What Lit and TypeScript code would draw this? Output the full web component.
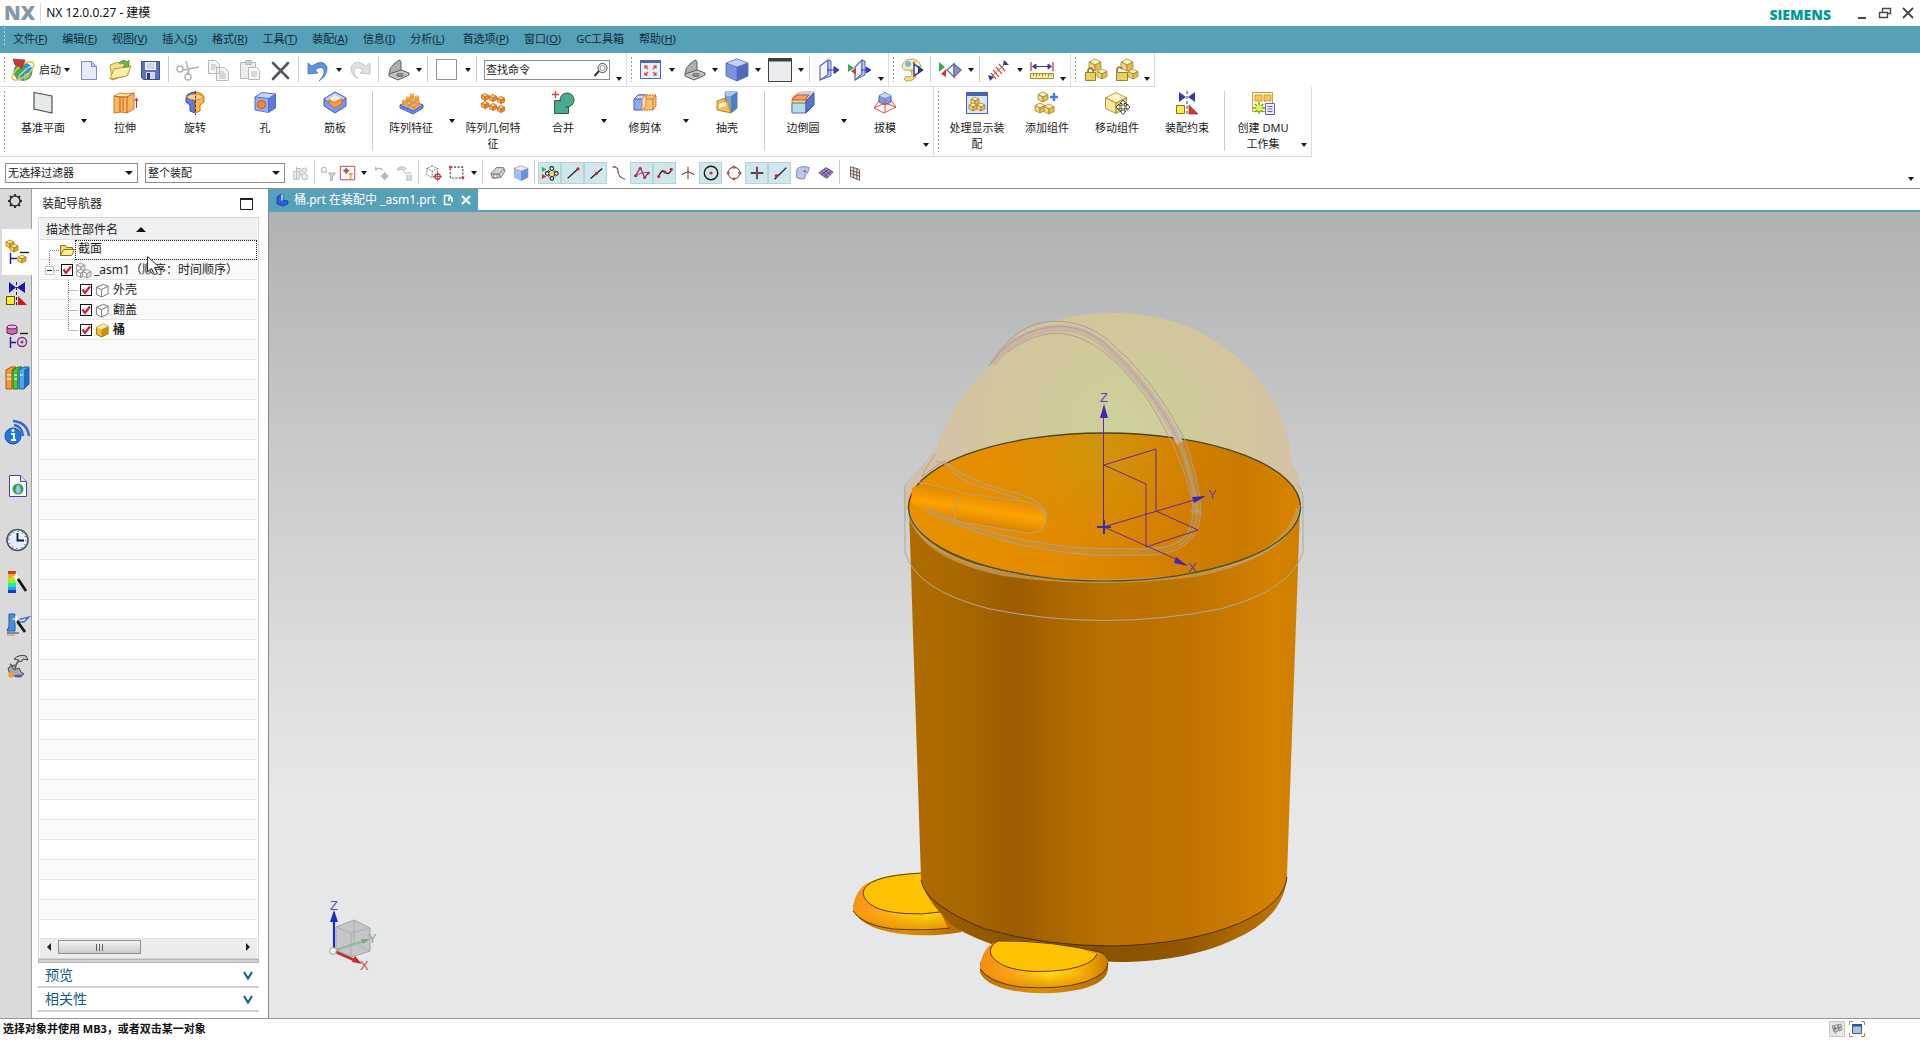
import { LitElement, html, svg, css, TemplateResult, SVGTemplateResult } from "lit";
import { customElement } from "lit/decorators.js";
import { classMap } from "lit/directives/class-map.js";

/** Isometric cube centred on x,y with half-width w. */
const cube = (x: number, y: number, w: number, top: string, left: string, right: string, line: string) => {
  const h = w / 2;
  return svg`
    <polygon points="${x},${y - w} ${x + w},${y - h} ${x},${y} ${x - w},${y - h}" fill=${top} stroke=${line} stroke-width=".8" stroke-linejoin="round"/>
    <polygon points="${x - w},${y - h} ${x},${y} ${x},${y + w} ${x - w},${y + h}" fill=${left} stroke=${line} stroke-width=".8" stroke-linejoin="round"/>
    <polygon points="${x + w},${y - h} ${x},${y} ${x},${y + w} ${x + w},${y + h}" fill=${right} stroke=${line} stroke-width=".8" stroke-linejoin="round"/>`;
};
const gold = (x: number, y: number, w: number) => cube(x, y, w, "#fdf2b8", "#f0d67c", "#e0bd55", "#a8842c");
const orange = (x: number, y: number, w: number) => cube(x, y, w, "#ffd98a", "#ffb347", "#f08a24", "#c8601c");

const ICONS: Record<string, SVGTemplateResult> = {
  start: svg`<circle cx="12" cy="13.500" r="9.500" fill="#2f8fd8"/><path d="M3 11q3-5 9-4l4 4-4 3-3 8q-6-3-6-11z" fill="#48b040"/><path d="M13 16q4-2 7 0-2 5-7 6z" fill="#8ed04a"/><path d="M9 22q-3-3 1-6 6-6 11-9" fill="none" stroke="#b8e0f8" stroke-width="1.200"/><ellipse cx="12" cy="13" rx="13" ry="5.500" fill="none" stroke="#e8c83a" stroke-width="1.600" transform="rotate(-38 12 13)"/><path d="M2 1 14 2 10.500 11 8 8 4 7z" fill="#d0343c" stroke="#8c1c28" stroke-width=".6"/>`,
  new: svg`<path d="M4.500 3.500h10l5 5v13h-15z" fill="#e6ebfa" stroke="#7e88cc"/><path d="M14.500 3.500v5h5z" fill="#c4ccf0" stroke="#7e88cc"/>`,
  open: svg`<path d="M2 7l8-3 2 2 7-2 1 13-16 5z" fill="#f2e08a" stroke="#b89c34"/><path d="M2 21 6 11l17-3-4 10z" fill="#faf0a8" stroke="#b89c34"/><path d="M11 5q4-5 8-1l2-2v7h-6l2-2q-2-3-6-2z" fill="#6cb84a" stroke="#3c8428" stroke-width=".6"/>`,
  save: svg`<path d="M2.500 3.500h18v18h-16l-2-2z" fill="#5a72b8" stroke="#3c4c8c"/><path d="M6 4h11v8H6z" fill="#eef2fa"/><path d="M7.500 6h8M7.500 8h8M7.500 10h8" stroke="#a8b4d0"/><path d="M7 14h9v7H7z" fill="#d0d8ec"/><path d="M8 15h3v6H8z" fill="#2c3c70"/>`,
  cut: svg`<g fill="none" stroke="#b4b4b4" stroke-width="1.500"><circle cx="12" cy="19" r="3"/><circle cx="4" cy="11" r="3"/><path d="M13 16 10 3M7 12 23 9M11 16l3-6"/></g>`,
  copy: svg`<g fill="#f4f4f4" stroke="#b8b8b8"><path d="M1.500 2.500h7l4 4v9h-11zM9.500 9.500h8l4 4v9h-12z"/><path d="M4 7h5M4 9h6M4 11h4M12 14h5M12 16h7M12 18h7M12 20h7"/></g>`,
  paste: svg`<g fill="#ececec" stroke="#b8b8b8"><path d="M2.500 4.500h15v16h-15z"/><path d="M7.500 2.500h6v4h-6z" fill="#d0d0d0"/><path d="M10.500 9.500h8l3 3v9h-11z" fill="#f8f8f8"/><path d="M13 14h6M13 16h6M13 18h6"/></g>`,
  del: svg`<path d="M4 5 19 20M19 5 4 21" stroke="#54585c" stroke-width="2.600" stroke-linecap="round"/>`,
  undo: svg`<path d="M2 5v11l10-1-3-3q7-5 9 0 1 5-5 11 9-6 8-14-4-9-15-1z" fill="#5a92e0" stroke="#3c70c0" stroke-width=".7"/>`,
  redo: svg`<path d="M21 5v11l-10-1 3-3q-7-5-9 0-1 4 4 9-8-5-7-12 4-9 15-1z" fill="#e2e2e2" stroke="#bcbcbc" stroke-width=".8"/>`,
  part: svg`<path d="M8 6 13 2q2 0 2 3v8l-7 3-5 0Q3 10 8 6z" fill="#b0b0b0" stroke="#606060"/><path d="M3 16 15 12l8 3v2l-11 5-9-4z" fill="#c4c4c4" stroke="#606060"/><ellipse cx="14" cy="17" rx="3.500" ry="1.600" fill="#8c8c8c" stroke="#606060" stroke-width=".7"/>`,
  square: svg`<path d="M1.500 1.500h20v20h-20z" fill="#fff" stroke="#909090"/>`,
  fit: svg`<path d="M1.500 2.500h20v18h-20z" fill="#e8eefa" stroke="#4c64b4"/><path d="M1 2h21v3H1z" fill="#4c64b4"/><g stroke="#d85030" stroke-width="1.300" fill="none"><path d="M9 11 6 8M6 10.500V8h2.500M14 11l3-3M14.500 8H17v2.500M9 14l-3 3M6 14.500V17h2.500M14 14l3 3M14.500 17H17v-2.500"/></g>`,
  bluecube: svg`<path d="M12 1 23 5 12 9 1 5z" fill="#c4d2f8"/><path d="M1 5 12 9v14L1 18z" fill="#7c94dc"/><path d="M23 5 12 9v14l11-5z" fill="#5068bc"/><path d="M12 1 23 5v13l-11 5L1 18V5zM1 5l11 4 11-4M12 9v14" fill="none" stroke="#5468b4" stroke-width=".8"/>`,
  winrect: svg`<path d="M.500 1.500h23v22H.500z" fill="#ececf0" stroke="#404040"/><path d="M0 0h24v3.500H0z" fill="#404040"/>`,
  section: svg`<path d="M3 8 11 2v15l-8 5z" fill="#f2f5ff" stroke="#5868b0" stroke-width="1.200"/><path d="M11 2l3 1v15l-11 4 8-5z" fill="#b8c6ec" stroke="#5868b0"/><path d="M10 12h8M17 8.500l5 3.500-5 3.500z" stroke="#3838b8" fill="#3838b8"/>`,
  section2: svg`<path d="M7 9 14 2v14l-7 6z" fill="#f2f5ff" stroke="#5868b0" stroke-width="1.200"/><path d="M14 2l3 1v14l-10 5 7-6z" fill="#b8c6ec" stroke="#5868b0"/><path d="M13 12h6M18 9l5 3-5 3z" stroke="#3838b8" fill="#3838b8"/><path d="M0 6l6 4-6 4z" fill="#2fae4a"/><path d="M8 10v7l-5-4z" fill="#d8343c"/>`,
  palette: svg`<path d="M1 8Q3 1 11 1q8 1 9 8-2-2-5 1-1 4-5 2-9 1-9-4z" fill="#f8ecc0" stroke="#c0a458"/><circle cx="7" cy="6" r="3" fill="#74bcd8"/><circle cx="13" cy="4.500" r="1.500" fill="#e8a040"/><path d="M9 13q4 3 0 6-5-2-6 2l2 2q9 0 10-5l-1-5z" fill="#f6de90" stroke="#c0a458"/><path d="M13 6v12l8.500-6z" fill="#fff" stroke="#4048a0" stroke-width="1.600"/><path d="M17 8v8l5-4z" fill="#303878"/>`,
  showhide: svg`<path d="M1 4 7 9 1 14z" fill="#2fae4a"/><path d="M8 11v8l-5-3z" fill="#d8343c"/><path d="M9 12 16 6v13z" fill="#fff" stroke="#5c6cb0" stroke-width="1.300"/><path d="M16 6l7 6-7 7z" fill="#8898cc" stroke="#5c6cb0" stroke-width="1.300"/>`,
  dist: svg`<path d="M3 20 20 4" stroke="#6c6c9c"/><path d="M1 17l6 2-4 4zM17 2l5 5-6 0z" fill="#3838a0"/><path d="M6 12l6 7M9 9l6 7M12 6l6 7M4 15l5 6" stroke="#d85040" stroke-width="1.200"/>`,
  ruler: svg`<path d="M1 4v9M23 4v9" stroke="#d84040" stroke-width="1.400"/><path d="M3 8.500h18M6 6 2.500 8.500 6 11zM18 6l3.500 2.500L18 11z" fill="#3838a0" stroke="#3838a0"/><path d="M.500 15.500h23v5H.500z" fill="#f8eca0" stroke="#a88c30"/><path d="M3.500 16v2M6.500 16v3M9.500 16v2M12.500 16v3M15.500 16v2M18.500 16v3M21 16v2" stroke="#a88c30"/>`,
  lock1: svg`${gold(12, 7, 6)}${gold(19, 16, 5)}<path d="M2.500 14.500h10v8h-10z" fill="#ecd060" stroke="#9c8028"/><path d="M5 14v-2q2.500-4 5 0v2" fill="none" stroke="#8c7430" stroke-width="1.600"/>`,
  lock2: svg`${gold(13, 7, 6)}${gold(19, 16, 5)}<path d="M2.500 14.500h11v8h-11z" fill="#ecd060" stroke="#9c8028"/><path d="M3 14v-3q2.500-4 5 0" fill="none" stroke="#8c7430" stroke-width="1.600"/>`,
  plane: svg`<path d="M3 1.500 21 5v17L3 18z" fill="#e4eae8" stroke="#505654" stroke-width="1.200"/>`,
  extrude: svg`<path d="M1 5 7 2l6 1 8-1v16l-7 4-6-1-7 1z" fill="#fbb860" stroke="#c87830"/><path d="M1 5l6 1 7 0 7-4M7 6v15M14 6v16M10 6v14" fill="none" stroke="#c05a18"/><path d="M2 5l5-2.500 6 1L20 2.500 14 5z" fill="#ffe0a8"/><path d="M23.500 17V8M22 10l1.500-3L25 10" stroke="#c03030" fill="none"/>`,
  revolve: svg`<path d="M12 1Q3 2 3 7v4l4 3v6l5 2z" fill="#5c7ce0" stroke="#3448a0"/><path d="M12 1q9 1 9 6v4l-4 3v6l-5 2z" fill="#ffb84c" stroke="#c87020"/><path d="M3 6q9-6 18 0-4 3-9 3T3 6z" fill="#ffd890" stroke="#c87020" stroke-width=".7"/><path d="M12.500 0v24" stroke="#902020" stroke-dasharray="3 1.500"/>`,
  hole: svg`<path d="M2 6 9 1.500 22.500 3l-7 4.500z" fill="#c8d6fc"/><path d="M2 6l13.500 1.500V21L2 19z" fill="#94aef4"/><path d="M15.500 7.500l7-4.500v14l-7 4.500z" fill="#5c78dc"/><path d="M2 6 9 1.500 22.500 3v14l-7 4.500L2 19zM2 6l13.500 1.500 7-4.500M15.500 7.500V21" fill="none" stroke="#4860c4" stroke-width=".9"/><circle cx="8.500" cy="13.500" r="4" fill="#ff8c28" stroke="#c05010"/>`,
  rib: svg`<path d="M12 1 23 7v8l-11 7L1 15V8z" fill="#7c98ec" stroke="#4058b8"/><path d="M12 1 23 7l-11 8L1 8z" fill="#c0d0fa" stroke="#4058b8" stroke-width=".8"/><path d="M12 4 19 7.500v4L12 17 6 12.500v-4z" fill="#fff0d8"/><path d="M6 8.500l5 3 8-4v5L12 17l-6-4.500z" fill="#ff9838" stroke="#c86418" stroke-width=".8"/>`,
  patfeat: svg`<path d="M1 14 11 9l13 5-10 6z" fill="#a8bef8" stroke="#4c68c4"/><path d="M1 14v3l13 6 10-6v-3l-10 6z" fill="#6888e0" stroke="#4c68c4"/>${[[5, 11], [9, 8], [13, 5], [10, 13], [14, 10], [18, 7], [15, 15], [19, 12]].map(([x, y]) => svg`<path d="M${x - 2} ${y - 1}v4q2 1.500 4 0v-4z" fill="#f09830"/><ellipse cx=${x} cy=${y - 1} rx="2" ry="1.200" fill="#ffc870" stroke="#c87020" stroke-width=".5"/>`)}`,
  patgeo: svg`${orange(4, 6, 3.5)}${orange(12, 7, 3.5)}${orange(20, 9, 3.5)}${orange(4, 14, 3.5)}${orange(12, 16, 3.5)}${orange(20, 18, 3.5)}`,
  unite: svg`<path d="M3.500 9.500h14v13h-14z" fill="#4ca890" stroke="#285c50"/><circle cx="16" cy="9" r="7" fill="#4ca890" stroke="#285c50"/><path d="M4.500 10.500h10v8h-10z" fill="#4ca890"/><path d="M4.500 0v7M1 3.500h7" stroke="#d84040" stroke-width="1.400"/>`,
  trim: svg`<path d="M1 8 5 4h8l-3 4v11H1z" fill="#90a8f0" stroke="#4c60b8"/><path d="M1 8h9l3-4H5z" fill="#c8d4fc" stroke="#4c60b8"/><path d="M11 8l3-4h9v11l-3 4h-9z" fill="#ffc468" stroke="#c83c28" stroke-dasharray="1.500 1"/><path d="M11 8h9l3-4M20 8v11" fill="none" stroke="#c87830"/><path d="M9 8l4-5v12l-4 5z" fill="#fcd8b8" stroke="#c87830" stroke-width=".7"/>`,
  shell: svg`<path d="M10 1h12v16l-6 5-4-5z" fill="#7ca4d8" stroke="#5078b4"/><path d="M16 5l6-4v16l-6 5z" fill="#4c80c0"/><path d="M10 1h12l-6 4h-5z" fill="#a8c8ec"/><path d="M2 10l8-3v4h4v5l2 6-14-3z" fill="#f0bc50" stroke="#b88428"/><path d="M4 13l7-2v4l-7 2z" fill="#fff4cc"/>`,
  blend: svg`<path d="M1 9Q3 2 12 1h11l-8 7v13H1z" fill="#ffd870" stroke="#c07828" stroke-width=".8"/><path d="M6 3Q9 1 12 1h11l-6 4H7z" fill="#b8dce8"/><path d="M1 9q2-4 6-5h11q-3 2-3 5z" fill="#ff9c60" stroke="#c03828" stroke-width=".8"/><path d="M1 12h14v10H1z" fill="#b4dcec" stroke="#5470b8"/><path d="M15 10l8-8v12l-8 8z" fill="#5c74cc" stroke="#3c50a8"/>`,
  draft: svg`<path d="M1 17 12 1l11 15-12 6z" fill="#fdf4f4" stroke="#d85848"/><path d="M6 4.500 12 2l6 2.500v6.500L12 14l-6-3z" fill="#7c9cdc" stroke="#4868b0"/><path d="M6 4.500l6 2.500 6-2.500L12 2z" fill="#c4d8f8"/><path d="M12 7v15M1 17l11-5 11 4" stroke="#d85848" fill="none"/>`,
  procdisp: svg`<path d="M1.500 1.500h21v21h-21z" fill="#dce6fa" stroke="#4860b8"/><path d="M1 1h22v4H1z" fill="#4860b8"/>${gold(10, 10, 4)}${gold(8, 16, 4)}${gold(16, 16, 4)}`,
  addcomp: svg`${gold(8, 6, 5)}${gold(5, 17, 5)}${gold(14, 18, 5)}<path d="M19 2v8M15 6h8" stroke="#3c80dc" stroke-width="2.400"/>`,
  movecomp: svg`${cube(11, 12, 10.5, "#fff6c4", "#fbe795", "#ecd070", "#9c8030")}<path d="M18 9l3 3.500h-2V15h3v-2l3 3-3 3.500V17h-3v3h2l-3 3.500-3-3.500h2v-3h-3v2.500L11 16l3-3v2h3v-2.500h-2z" fill="#fff" stroke="#202020" stroke-width=".8"/>`,
  constrain: svg`<path d="M4 1v10l7-5zM20 1v10l-7-5z" fill="#3c34b8"/><path d="M12 0v24" stroke="#404040" stroke-dasharray="3 2"/><path d="M1.500 14.500h8v8h-8z" fill="#fcec50" stroke="#807020"/><path d="M14 14v9h9z" fill="#d03c3c" stroke="#801818" stroke-width=".6"/>`,
  dmu: svg`<path d="M1.500 1.500h20v19h-20z" fill="#fff4d0" stroke="#d0a040"/><path d="M4 4h7v6H4zM13 4h7v6h-7z" fill="#f8c850" stroke="#b88420" stroke-width=".7"/><path d="M8 11v12M2 17h12M4 13l8 8M12 13l-8 8" stroke="#48b030" stroke-width="1.400"/><circle cx="8" cy="17" r="3" fill="#f0f040"/><path d="M14.500 12.500h9v11h-9z" fill="#f0ecfc" stroke="#7060a8"/><path d="M16.500 15.500h5M16.500 18h5M16.500 20.500h5" stroke="#7060a8"/>`,
};

/* Selection bar glyphs, drawn on a 20 unit grid. */
const SMALL: Record<string, SVGTemplateResult> = {
  g1: svg`<g fill="#ececec" stroke="#b8b8b8"><path d="M2 8h6v9H2zM5 5h5v9"/><circle cx="14" cy="7" r="2.500"/><circle cx="14" cy="14" r="3.500"/><path d="M5 3v14"/></g>`,
  g2: svg`<g fill="none" stroke="#b8b8b8" stroke-width="1.300"><path d="M3 5q3-3 5 0M3 5v4h5V6"/><path d="M11 10h7l-3 4v4h-2v-4z" fill="#d4d4d4"/></g>`,
  box: svg`<path d="M1.500 2.500h16v15h-16z" fill="#fff" stroke="#b83848"/><path d="M8 4v7M4.500 7.500h7" stroke="#604048"/><circle cx="8" cy="7.500" r="2" fill="none" stroke="#804048"/><path d="M10 10h6l-2 3v4h-2v-4z" fill="#f0a848"/>`,
  g3: svg`<g fill="none" stroke="#b0b0b0" stroke-width="1.300"><path d="M3 7q3-5 8 0M3 7V3M13 9v9M8.500 13.500h9"/><circle cx="13" cy="13.500" r="2.500"/></g>`,
  g4: svg`<g fill="#dedede" stroke="#b4b4b4"><path d="M2 5q5-4 9 0l-2 2q-3-2-7 0zM8 7l3 4M11 10h6M12 12v6h5v-6"/></g>`,
  dotcube: svg`<path d="M8 2l6 3v7l-6 3-6-3V5zM2 5l6 3 6-3M8 8v7" fill="none" stroke="#505050" stroke-dasharray="1.500 1.500"/><circle cx="14" cy="14" r="3" fill="none" stroke="#b83838" stroke-width="1.300"/><path d="M14 9v10M9 14h10" stroke="#b83838"/>`,
  dotrect: svg`<path d="M2.500 3.500h14v12h-14z" fill="none" stroke="#404040" stroke-width="1.200" stroke-dasharray="2.500 1.500"/><path d="M1 2h3v3H1zM15 14h3v3h-3z" fill="#c84040"/>`,
  shade: svg`<path d="M2 11 8 4h8l2 4-5 7-9 1z" fill="#d0d0d8" stroke="#707078"/><path d="M2 11l9 0 6-6M11 11l2 4" fill="none" stroke="#707078"/><path d="M5 12h4v3H5z" fill="#fff" stroke="#c04848" stroke-width=".8"/>`,
  bcube: svg`<path d="M10 2l8 3v10l-8 4-8-4V5z" fill="#9cc0ec"/><path d="M10 2l8 3-8 3-8-3z" fill="#e0ecfc" stroke="#d06868" stroke-width=".6"/><path d="M10 8l8-3v10l-8 4z" fill="#6c90d8"/>`,
  snap: svg`<path d="M1 3l5 3-5 3z" fill="#2fae4a"/><path d="M1 11l5 3-5 3z" fill="#d03838"/><g fill="#fff" stroke="#202020" stroke-width="1.300"><circle cx="12" cy="5" r="2"/><circle cx="12" cy="16" r="2"/><circle cx="7" cy="10.500" r="2"/><circle cx="17" cy="10.500" r="2"/></g><path d="M8 7l8 7M16 7l-8 7" stroke="#202020"/><circle cx="12" cy="10.500" r="2.500" fill="#f8d840"/>`,
  end: svg`<path d="M4 16 16 5" stroke="#181818" stroke-width="1.400"/><circle cx="15.500" cy="5.500" r="1.800" fill="#c82838"/>`,
  mid: svg`<path d="M4 16 17 5" stroke="#181818" stroke-width="1.400"/><circle cx="10.500" cy="10.500" r="1.800" fill="#c82838"/>`,
  curve: svg`<path d="M3 3q6 0 6 5 0 7 8 9" fill="none" stroke="#585858" stroke-width="1.200"/><path d="M3 3h3M9 8v2" stroke="#c05050" stroke-width="1.500"/>`,
  poly: svg`<path d="M3 13 8 4l5 11 4-5" fill="none" stroke="#b02848" stroke-width="1.400"/><path d="M2 14Q10 8 18 10" fill="none" stroke="#4848a0"/><g fill="#c82838"><circle cx="3" cy="13" r="1.800"/><circle cx="8" cy="5" r="1.800"/><circle cx="13" cy="15" r="1.800"/><circle cx="17" cy="10" r="1.800"/></g>`,
  spline: svg`<path d="M3 14Q6 5 10 9t7-2" fill="none" stroke="#181818" stroke-width="1.400"/><g fill="#c82838"><circle cx="3" cy="14" r="1.800"/><circle cx="10" cy="9" r="1.800"/><circle cx="17" cy="6" r="1.800"/></g>`,
  inter: svg`<path d="M10 3v14M3 12q7-6 14 0" fill="none" stroke="#606060" stroke-width="1.300"/><circle cx="10" cy="9" r="1.600" fill="#c05858"/>`,
  center: svg`<circle cx="10" cy="10" r="7.500" fill="none" stroke="#181818" stroke-width="1.500"/><circle cx="10" cy="10" r="1.800" fill="#c82838"/>`,
  quad: svg`<circle cx="10" cy="10" r="6.500" fill="none" stroke="#686868" stroke-width="1.200"/><g fill="#c85050"><circle cx="10" cy="3.500" r="1.800"/><circle cx="10" cy="16.500" r="1.800"/><circle cx="3.500" cy="10" r="1.800"/><circle cx="16.500" cy="10" r="1.800"/></g>`,
  plus: svg`<path d="M10 3v14M3 10h14" stroke="#181818" stroke-width="1.500"/><circle cx="10" cy="10" r="1.800" fill="#c82838"/>`,
  oncurve: svg`<path d="M4 17 17 4" stroke="#181818" stroke-width="1.400"/><circle cx="6" cy="13" r="1.900" fill="#c82838"/>`,
  surf: svg`<path d="M3 6q5-5 14-2l-2 6q-3 1-3 6-5 2-9-1z" fill="#b8c8ec" stroke="#7080a8"/><circle cx="12" cy="8" r="1.400" fill="#c05858"/>`,
  mesh: svg`<path d="M2 10 10 4l8 5-7 7z" fill="#a888c8" stroke="#605080"/><path d="M5 8l7 7M8 6l7 6M5 12l8-6M8 14l8-6" stroke="#503c70"/>`,
  grid: svg`<path d="M5 3l10 3v12L5 14z" fill="#f0e4e0" stroke="#605048"/><path d="M8.500 4v11.500M12 5v12M5 7l10 3M5 10.500l10 3" stroke="#605048"/>`,
};

/* Resource bar glyphs. */
const RAIL: Record<string, SVGTemplateResult> = {
  gear: svg`<circle cx="12" cy="12" r="5" fill="none" stroke="#303030" stroke-width="1.600"/><path d="M12 5v2M12 17v2M5 12h2M17 12h2M7 7l1.500 1.500M15.500 15.500 17 17M17 7l-1.500 1.500M8.500 15.500 7 17" stroke="#303030" stroke-width="2"/>`,
  asm: svg`${cube(5, 4, 4, "#fff0a0", "#f8cc48", "#e0a828", "#b07c10")}${cube(9, 8, 4, "#fff0a0", "#f8cc48", "#e0a828", "#b07c10")}${cube(17, 19, 4, "#fff0a0", "#f8cc48", "#e0a828", "#b07c10")}<path d="M5.500 13v11M5.500 18.500H12" stroke="#1818a0" stroke-width="1.400"/><path d="M15 12.500h9" stroke="#202020" stroke-width="1.400"/>`,
  con: svg`<path d="M4 0v11l7-5.500zM20 0v11l-8-5.500z" fill="#1818b0"/><path d="M11.500 0v24" stroke="#202020" stroke-dasharray="3 2"/><path d="M1.500 14.500h8v8h-8z" fill="#fcec30" stroke="#605010"/><path d="M13 14v9h9z" fill="#c81818"/>`,
  nav: svg`<path d="M2 3v6q5 3 10 0V3z" fill="#c868b8" stroke="#602060"/><ellipse cx="7" cy="3" rx="5" ry="2" fill="#f0b8e4" stroke="#602060"/><path d="M5.500 13v11M5.500 18.500H11" stroke="#1818a0" stroke-width="1.400"/><path d="M15 9.500h8" stroke="#202020" stroke-width="1.400"/><circle cx="17" cy="18" r="4.500" fill="none" stroke="#903078" stroke-width="1.400"/><circle cx="17" cy="18" r="1.500" fill="#903078"/>`,
  books: svg`<path d="M1 4l5-3h5L7 4v19H1z" fill="#f89838" stroke="#a85810"/><path d="M8 4l5-3h4l-4 3v19H8z" fill="#48c838" stroke="#187818"/><path d="M14 4l5-3h5v17l-5 5h-5z" fill="#4ca8e8" stroke="#1860a8"/><path d="M19 4l5-3v17l-5 5z" fill="#2468c0"/><path d="M2 9h4M2 13h4M9 9h3M9 13h3M15 9h3" stroke="#fff"/>`,
  info: svg`<circle cx="8" cy="16" r="8" fill="#2078e0" stroke="#1050a8"/><path d="M6 14h3v6h2M6 20h5" stroke="#fff" stroke-width="2" fill="none"/><circle cx="8" cy="10.500" r="1.500" fill="#fff"/><path d="M9 5q8 1 9 11M8 1q14 1 16 15" fill="none" stroke="#3c64c8" stroke-width="2.400"/>`,
  doc: svg`<path d="M4.500 1.500h11l6 6v15h-17z" fill="#fff" stroke="#384c9c"/><path d="M15.500 1.500v6h6" fill="#d8e0f8" stroke="#384c9c"/><circle cx="13" cy="15" r="5.500" fill="#3c9c50"/><path d="M13 10q6 7 0 10-5-3 0-10z" fill="#8cc8f0"/>`,
  clock: svg`<circle cx="12.500" cy="12" r="10.500" fill="#e4eefa" stroke="#50585f" stroke-width="1.600"/><circle cx="12.500" cy="12" r="8.500" fill="none" stroke="#283040" stroke-dasharray="1 3.450"/><path d="M12.500 5v7.500H19" fill="none" stroke="#101828" stroke-width="1.800"/>`,
  wand: svg`<path d="M3 1h8v3H3z" fill="#e83020"/><path d="M3 4h8v4H3z" fill="#f8b020"/><path d="M3 8h8v5H3z" fill="#a0f020"/><path d="M3 13h8v4H3z" fill="#20e8b0"/><path d="M3 17h8v3H3z" fill="#20a0f8"/><path d="M3 20h8v3H3z" fill="#1838c0"/><path d="M13 9l8 12" stroke="#181818" stroke-width="2.800"/><path d="M11 2l1 4 4 1-4 1-1 4-1-4-3-1 3-1z" fill="#fff"/>`,
  heal: svg`<path d="M4 2h6v17H2l2-5z" fill="#4890d8" stroke="#2058a0"/><path d="M12 8l12-3-5 5h-6M10 7h6M2 21h12" stroke="#4870c0" stroke-width="1.400" fill="none"/><path d="M2 23h8" stroke="#c8b848" stroke-width="1.600"/><path d="M12 9l8 11" stroke="#181818" stroke-width="2.800"/><path d="M11 2l1 4 4 1-4 1-1 4-1-4-3-1 3-1z" fill="#fff"/>`,
  tools: svg`<path d="M9 5q5-5 12-3l2 4-5-1-2 3-3-2z" fill="#d0d0d0" stroke="#383838"/><path d="M14 6l-3 5-4 1-2-2M11 11l-1 4" fill="none" stroke="#606060" stroke-width="1.800"/><path d="M3 14l4-2 2 4 5-2 2 4 3 2-5 3-9-2z" fill="#a8a8b4" stroke="#484850"/><circle cx="6" cy="21" r="2.800" fill="#f0a030"/><path d="M10 22h7" stroke="#68587c" stroke-width="2.400"/>`,
};

const caret = html`<svg class="caret" viewBox="0 0 6 4" aria-hidden="true"><path d="M0 0h6L3 4z" fill="#181818"/></svg>`;
const ic = (set: Record<string, SVGTemplateResult>, name: string, box: number, cls: string) =>
  html`<svg class=${cls} viewBox="0 0 ${box} ${box}" aria-hidden="true">${set[name]}</svg>`;
const sep = html`<i class="sep"></i>`;
const grip = html`<i class="grip"></i>`;

@customElement("nx-viewport")
export class NxViewport extends LitElement {
  static styles = css`
    :host { display: flex; min-width: 0; min-height: 0; background: linear-gradient(#b0b2b2 0, #c6c8c9 28%, #dfe0e1 60%, #e6e7e9 72%, #e6e7e9); }
    .scene { width: 100%; height: 100%; display: block; }
    .lbl { font-family: "Liberation Sans", Arial, sans-serif; font-size: 13px; }
  `;

  private dome() {
    return svg`
      <path d="M1299 505Q1303 478 1293 465Q1286 410 1255 375Q1200 313 1112 313Q1080 313 1052 322Q1022 326 1004 347L990 366Q948 405 935 452L906 486V510Q1100 600 1299 505z" fill="url(#dome)"/>
      <path d="M934 453L906 484Q903 490 905 520" fill="none" stroke="#c2b79a"/>`;
  }

  render() {
    return html`
      <svg class="scene" viewBox="269 212 1651 806" role="img">
        <defs>
          <linearGradient id="side" x1="909" x2="1300" y1="0" y2="0" gradientUnits="userSpaceOnUse">
            <stop offset="0" stop-color="#b06c00"/><stop offset=".14" stop-color="#a86700"/>
            <stop offset=".23" stop-color="#a06000"/><stop offset=".28" stop-color="#9c5c00"/>
            <stop offset=".36" stop-color="#a86500"/><stop offset=".5" stop-color="#b87000"/>
            <stop offset=".72" stop-color="#c07300"/><stop offset=".86" stop-color="#cc7c00"/>
            <stop offset=".94" stop-color="#d48200"/><stop offset="1" stop-color="#ce7e00"/>
          </linearGradient>
          <linearGradient id="under" x1="921" x2="1287" y1="0" y2="0" gradientUnits="userSpaceOnUse">
            <stop offset="0" stop-color="#a06000"/><stop offset=".4" stop-color="#845000"/>
            <stop offset=".7" stop-color="#905600"/><stop offset=".9" stop-color="#b06c00"/><stop offset="1" stop-color="#c07600"/>
          </linearGradient>
          <linearGradient id="inner" x1="909" x2="1300" y1="0" y2="0" gradientUnits="userSpaceOnUse">
            <stop offset="0" stop-color="#e89200"/><stop offset=".4" stop-color="#e28a00"/>
            <stop offset=".65" stop-color="#d48000"/><stop offset=".85" stop-color="#ca7a00"/><stop offset="1" stop-color="#d88400"/>
          </linearGradient>
          <radialGradient id="spot" cx="1095" cy="450" r="110" gradientUnits="userSpaceOnUse">
            <stop offset="0" stop-color="#cc980c" stop-opacity=".9"/><stop offset=".5" stop-color="#d2920a" stop-opacity=".5"/><stop offset="1" stop-color="#dc8a00" stop-opacity="0"/>
          </radialGradient>
          <radialGradient id="dome" cx="1120" cy="425" r="185" gradientUnits="userSpaceOnUse">
            <stop offset="0" stop-color="#ced29c"/><stop offset=".35" stop-color="#cfca9a"/>
            <stop offset=".65" stop-color="#d3c69c"/><stop offset="1" stop-color="#d4c2a8"/>
          </radialGradient>
          <linearGradient id="handle" x1="985" x2="979" y1="492" y2="532" gradientUnits="userSpaceOnUse">
            <stop offset="0" stop-color="#dc8600"/><stop offset=".45" stop-color="#ffa202"/><stop offset=".75" stop-color="#e48c00"/><stop offset="1" stop-color="#b06a00"/>
          </linearGradient>
          <linearGradient id="rim1" x1="853" x2="950" y1="880" y2="930" gradientUnits="userSpaceOnUse">
            <stop offset="0" stop-color="#f08c10"/><stop offset=".3" stop-color="#ffa018"/><stop offset=".75" stop-color="#ffdc10"/><stop offset="1" stop-color="#f8b808"/>
          </linearGradient>
          <linearGradient id="rim2" x1="980" x2="1108" y1="0" y2="0" gradientUnits="userSpaceOnUse">
            <stop offset="0" stop-color="#f08c10"/><stop offset=".28" stop-color="#ffa818"/><stop offset=".55" stop-color="#ffdc10"/><stop offset=".8" stop-color="#f8ac08"/><stop offset="1" stop-color="#c87c00"/>
          </linearGradient>
          <linearGradient id="rimshade" x1="0" x2="0" y1="0" y2="1">
            <stop offset=".7" stop-color="#e08800" stop-opacity="0"/><stop offset="1" stop-color="#e08800" stop-opacity=".8"/>
          </linearGradient>
          <linearGradient id="padbase" x1="0" x2="1"><stop offset="0" stop-color="#c07200"/><stop offset=".5" stop-color="#dc8e08"/><stop offset="1" stop-color="#b06a00"/></linearGradient>
        </defs>

        <g stroke-linejoin="round">
          <path d="M853 905Q853 920 878 929Q915 940 962 932L950 915z" fill="url(#padbase)"/>
          <path id="r1" d="M922 873Q880 873 862 887Q853 897 853 911Q860 924 893 929Q925 932 948 928L925 880z" fill="url(#rim1)"/>
          <path d="M922 873Q880 873 862 887Q853 897 853 911Q860 924 893 929Q925 932 948 928L925 880z" fill="url(#rimshade)"/>
          <path d="M922 873Q864 876 863 893Q866 911 905 913.500Q922 915 940 913L922 875z" fill="#ffc203"/>
          <path d="M922 873Q864 876 863 893Q866 911 905 913.500Q922 915 940 912M853 911Q862 925 893 929Q925 931 950 928" fill="none" stroke="#4a3200" stroke-width=".9"/>
        </g>

        <path d="M921 875Q921 896 953 926Q975 940 1010 950Q1070 963 1127 962Q1190 960 1233 940Q1285 918 1287 875z" fill="url(#under)"/>
        <path d="M909 510L921 878Q925 905 985 929Q1045 946 1113 946Q1190 944 1240 923Q1285 903 1287 875L1300 510z" fill="url(#side)"/>
        <path d="M921 880Q925 905 985 929Q1045 946 1113 946Q1190 944 1240 923Q1285 903 1287 877" fill="none" stroke="#402800" stroke-width=".9"/>

        <g stroke-linejoin="round">
          <path d="M980 962v10Q984 984 1010 990Q1045 997 1082 989Q1108 982 1108 968v-8z" fill="url(#padbase)"/>
          <path d="M998 941Q982 946 980 968Q990 983 1020 987Q1060 990 1085 982Q1108 974 1108 963Q1108 957 1099 952Q1050 940 998 941z" fill="url(#rim2)"/>
          <path d="M998 941Q982 946 980 968Q990 983 1020 987Q1060 990 1085 982Q1108 974 1108 963Q1108 957 1099 952Q1050 940 998 941z" fill="url(#rimshade)"/>
          <path d="M998 941Q988 946 991 955Q1000 970 1035 971.500Q1070 972 1088 963Q1095 959 1097 954Q1050 939 998 941z" fill="#ffc203"/>
          <path d="M1104 953Q1050 940 998 941Q988 946 991 955Q1000 970 1035 971.500Q1070 972 1088 963Q1095 959 1097 954M980 969Q990 983 1020 987Q1060 990 1085 982Q1108 974 1108 963" fill="none" stroke="#4a3200" stroke-width=".9"/>
        </g>

        ${this.dome()}
        <ellipse cx="1104.500" cy="507" rx="196" ry="74" fill="url(#inner)" stroke="#4c4420" stroke-width="1.300"/>
        <ellipse cx="1104.500" cy="507" rx="195" ry="73" fill="url(#spot)"/>

        <path d="M912 488Q918 484 928 485L967 494L1022 501Q1046 505 1046 521Q1044 533 1028 533L997 528L953 520Q925 515 911 502z" fill="url(#handle)"/>
        <g fill="none" stroke="#bea078" stroke-width="1.200">
          <path d="M918 482Q940 486 967 494L1022 501Q1046 505 1046 521Q1044 533 1028 533L997 528L953 520Q935 517 925 511M959 496Q954 508 955 520"/>
          <path d="M936 461Q948 463 955 474Q966 484 985 488L1020 499M944 461Q955 472 985 484L1022 495Q1044 502 1047 517"/>
        </g>

        <path d="M910 515Q925 560 1010 575Q1104 588 1200 574Q1288 555 1298 508" fill="none" stroke="#c89c50" stroke-width="4" stroke-opacity=".75"/>
        <g fill="none" stroke="#b4a896" stroke-width="1">
          <path d="M909 510Q912 545 975 565Q1104 597 1234 565Q1297 545 1300 505"/>
          <path d="M905 486V552Q915 590 990 609Q1104 632 1220 609Q1292 590 1303 552V500Q1303 489 1297 484"/>
        </g>
        <path d="M908.500 507A196 74 0 0 0 1300.500 507" fill="none" stroke="#575125" stroke-width="1.200"/>

        <g fill="none">
          <path d="M1180 443Q1194 480 1197 510Q1196 548 1150 551L1093 552Q1010 545 947 519L930 511" stroke="#c09450" stroke-width="6" stroke-opacity=".3"/>
          <path d="M992 364Q1010 340 1038 331Q1075 321 1103 344Q1152 386 1180 443" stroke="#c8b6a2" stroke-width="7"/>
          <path d="M1180 443Q1194 480 1197 515" stroke="#c0965c" stroke-width="6" stroke-opacity=".7"/>
          <g stroke="#aea094" stroke-width="1">
            <path d="M989 366Q1010 333 1033 325Q1072 313 1107 339Q1155 380 1184 438Q1199 480 1201 510Q1200 538 1180 548Q1165 555 1147 555H1093Q1010 549 947 520L926 507"/>
            <path d="M992 362Q1012 335 1040 329Q1075 320 1104 343Q1152 386 1180 443Q1193 480 1197 512Q1196 538 1178 546"/>
            <path d="M1007 352Q1045 325 1077 337Q1110 348 1148 400Q1186 460 1193 508Q1193 535 1177 543Q1165 549 1140 549L1080 548Q1000 540 950 518"/>
            <path d="M1190 511h11"/>
            <path d="M935 455Q925 468 922 477Q935 466 944 461"/>
          </g>
        </g>

        <g fill="none" stroke="#6a249c" stroke-width="1">
          <path d="M1103.500 416V527L1194 500M1104 527L1178 560"/>
          <path d="M1104 465L1156 449V511L1198 530L1146 547V484L1104 465"/>
        </g>
        <g fill="#3c28b4">
          <path d="M1104 404l4 14h-8zM1206 496l-14 1 2 6zM1188 566l-12-9-2 6z"/>
          <path d="M1097 526h14v2h-14zM1103 520h2v14h-2z"/>
        </g>
        <g class="lbl" fill="#5444b4">
          <text x="1100" y="402">Z</text><text x="1208" y="499">Y</text><text x="1188" y="572">X</text>
        </g>

        <g>
          <path d="M336 927L354 920L370 928V951L352 957L336 950z" fill="#c4c6c7" stroke="#a4a6a8"/>
          <path d="M336 927L351 933L370 928M351 933V957M354 920V943L336 950M354 943L370 951" fill="none" stroke="#aaacae"/>
          <path d="M336 950L364 941" stroke="#94b89c" stroke-width="2"/><path d="M370 939l-9 0 2 5z" fill="#7ca888"/>
          <path d="M334 948V918" stroke="#1430c8" stroke-width="2.200"/><path d="M334 910l4 12h-8z" fill="#1430c8"/>
          <path d="M336 952L354 960" stroke="#c82c34" stroke-width="3"/><path d="M362 964l-7-8-3 6z" fill="#c82c34"/>
          <circle cx="333" cy="951" r="3.500" fill="#f0f0f0" stroke="#909090" stroke-width=".8"/>
          <text class="lbl" x="330" y="910" fill="#5058c8">Z</text>
          <text class="lbl" x="368" y="943" fill="#80a488">Y</text>
          <text class="lbl" x="360" y="970" fill="#d04848">X</text>
        </g>
      </svg>`;
  }
}

interface Item { icon?: string; arrow?: "mid" | "low"; sep?: boolean; on?: boolean; tight?: boolean; name?: string }

const fileItems: Item[] = [
  { icon: "new", name: "新建" }, { icon: "open", name: "打开" }, { icon: "save", name: "保存" }, { sep: true },
  { icon: "cut", name: "剪切" }, { icon: "copy", name: "复制" }, { icon: "paste", name: "粘贴" }, { icon: "del", name: "删除" }, { sep: true },
  { icon: "undo", name: "撤销" }, { arrow: "mid" }, { icon: "redo", name: "重做" }, { sep: true },
  { icon: "part" }, { arrow: "mid" }, { sep: true }, { icon: "square" }, { arrow: "mid" }, { sep: true },
];
const viewItems: Item[] = [
  { icon: "fit" }, { arrow: "mid" }, { icon: "part" }, { arrow: "mid" }, { icon: "bluecube" }, { arrow: "mid" },
  { icon: "winrect" }, { arrow: "mid" }, { sep: true }, { icon: "section" }, { icon: "section2" }, { arrow: "low" },
];
const utilItems: Item[] = [
  { icon: "palette" }, { sep: true }, { icon: "showhide" }, { arrow: "mid" }, { sep: true },
  { icon: "dist" }, { arrow: "mid" }, { icon: "ruler" }, { arrow: "low" },
];
const lockItems: Item[] = [{ icon: "lock1" }, { icon: "lock2" }, { arrow: "low" }];

const featureItems: Item[] = [
  { icon: "plane", name: "基准平面" }, { arrow: "mid" }, { icon: "extrude", name: "拉伸" }, { icon: "revolve", name: "旋转" },
  { icon: "hole", name: "孔" }, { icon: "rib", name: "筋板" }, { sep: true },
  { icon: "patfeat", name: "阵列特征" }, { arrow: "mid" }, { icon: "patgeo", name: "阵列几何特征" }, { icon: "unite", name: "合并" }, { arrow: "mid" },
  { icon: "trim", name: "修剪体" }, { arrow: "mid" }, { icon: "shell", name: "抽壳" }, { sep: true },
  { icon: "blend", name: "边倒圆" }, { arrow: "mid" }, { icon: "draft", name: "拔模" }, { arrow: "low" },
];
const asmItems: Item[] = [
  { icon: "procdisp", name: "处理显示装配" }, { icon: "addcomp", name: "添加组件" }, { icon: "movecomp", name: "移动组件" },
  { icon: "constrain", name: "装配约束" }, { sep: true }, { icon: "dmu", name: "创建 DMU 工作集" }, { arrow: "low" },
];
const selItems: Item[] = [
  { icon: "g1" }, { sep: true }, { icon: "g2", tight: true }, { icon: "box", tight: true }, { arrow: "mid" }, { icon: "g3" }, { icon: "g4" }, { sep: true },
  { icon: "dotcube" }, { icon: "dotrect" }, { arrow: "mid" }, { sep: true }, { icon: "shade" }, { icon: "bcube" }, { sep: true },
  { icon: "snap", on: true }, { icon: "end", on: true }, { icon: "mid", on: true }, { icon: "curve" },
  { icon: "poly", on: true }, { icon: "spline", on: true }, { icon: "inter" }, { icon: "center", on: true }, { icon: "quad" },
  { icon: "plus", on: true }, { icon: "oncurve", on: true }, { icon: "surf" }, { icon: "mesh" }, { sep: true }, { icon: "grid" },
];
const menus: [string, string][] = [
  ["文件", "F"], ["编辑", "E"], ["视图", "V"], ["插入", "S"], ["格式", "R"], ["工具", "T"], ["装配", "A"], ["信息", "I"], ["分析", "L"],
  ["首选项", "P"], ["窗口", "O"], ["GC工具箱", ""], ["帮助", "H"],
];
const rail: { icon: string; gap?: boolean; on?: boolean }[] = [
  { icon: "asm", on: true }, { icon: "con" }, { icon: "nav" }, { icon: "books" }, { icon: "info", gap: true },
  { icon: "doc", gap: true }, { icon: "clock", gap: true }, { icon: "wand" }, { icon: "heal" }, { icon: "tools" },
];

@customElement("app-root")
export class AppRoot extends LitElement {
  static styles = css`
    :host { display: flex; flex-direction: column; height: 100vh; background: #fff; color: #1c1c1c; font: 11px/16px "Noto Sans", "Noto Sans CJK SC", sans-serif; overflow: hidden; }
    * { box-sizing: border-box; }
    button { border: 0; background: none; padding: 0; margin: 0; font: inherit; color: inherit; flex: none; display: flex; align-items: center; justify-content: center; }
    svg { display: block; flex: none; overflow: visible; }

    .title { display: flex; align-items: center; height: 26px; padding: 0 1px 0 4px; flex: none; }
    .nx { font: 800 20px/24px "Open Sans", "Noto Sans", sans-serif; color: #8397a6; padding-right: 5px; border-right: 1px solid #d4dade; height: 20px; display: flex; align-items: center; }
    .title h1 { font-size: 12px; font-weight: 400; margin: 0 auto 0 5px; color: #101010; }
    .siemens { font: 800 14px/16px "Open Sans", "Noto Sans", sans-serif; color: #009999; margin-right: 19px; padding-top: 3px; }
    .win { width: 23px; height: 24px; }
    .wins { display: flex; }
    .win svg { width: 14px; height: 14px; }

    .menubar { display: flex; align-items: center; height: 27px; background: #56a0b8; color: #0c2c38; padding: 0 6px 2px 3px; flex: none; }
    .menubar .grip { margin: 0; background-image: radial-gradient(circle, #b8dae4 1px, transparent 1px); height: 20px; }
    .menu { padding: 0 8px 0 7px; height: 22px; }
    .menu.wide { margin-left: 3px; }
    .menu u { text-underline-offset: 1px; }
    .grip { flex: none; width: 3px; margin: 3px 2px 4px 3px; align-self: stretch; background: radial-gradient(circle, #9c9c9c 1px, transparent 1px) 0 0 / 3px 4px; }

    .bar { display: flex; flex: none; }
    .group { display: flex; align-items: center; border-right: 1px solid #dcdcdc; border-bottom: 1px solid #dcdcdc; padding-right: 1px; }
    .std .group { height: 34px; }
    .big .group { height: 70px; align-items: stretch; }
    .sep { flex: none; width: 1px; margin: 3px 3px 4px 2px; align-self: stretch; background: #cccccc; }
    .btn { width: 31px; height: 30px; }
    .i24 { width: 24px; height: 24px; }
    .i20 { width: 18px; height: 18px; }
    .arr { width: 12px; height: 30px; }
    .arr.low { align-self: flex-end; height: 14px; margin-left: auto; }
    .caret { width: 6px; height: 4px; }
    .start { gap: 4px; padding-left: 3px; height: 30px; }
    .find { display: flex; align-items: center; width: 126px; height: 20px; margin: 0 3px 0 4px; border: 1px solid #8c8c8c; background: #fff; }
    .find input { flex: 1; min-width: 0; border: 0; outline: 0; padding: 0 1px; font: inherit; color: #181818; background: none; }
    .find input::placeholder { color: #181818; opacity: 1; }
    .find svg { width: 16px; height: 16px; }

    .fbtn { width: 70px; flex-direction: column; justify-content: flex-start; padding-top: 4px; }
    .fbtn span { width: 60px; margin-top: 5px; text-align: center; }
    .big .arr { align-self: flex-start; height: 70px; }
    .big .arr.mid { height: 68px; }
    .big .arr.low { align-self: flex-end; height: 22px; }
    .big .sep { margin-bottom: 5px; margin-top: 4px; }

    .selbar { align-items: center; height: 32px; border-bottom: 1px solid #889090; padding-left: 5px; }
    .selbar .btn { width: 23px; height: 22px; }
    .selbar .btn.tight { width: 20px; }
    .selbar .btn.on { background: #cfe7ec; border: 1px solid #b4d4dc; }
    .selbar .arr { height: 22px; }
    .selbar .arr.low { margin-right: 3px; align-self: center; margin-top: 12px; }
    .pick { display: grid; width: 133px; height: 20px; margin-right: 7px; flex: none; align-items: center; }
    .pick.second { width: 140px; margin-right: 4px; }
    .pick select { grid-area: 1 / 1; appearance: none; height: 20px; width: 100%; border: 1px solid #8c8c8c; border-radius: 0; background: #fff; padding: 0 2px; font: inherit; line-height: 16px; color: #181818; }
    .pick svg { grid-area: 1 / 1; justify-self: end; width: 8px; height: 4px; margin-right: 5px; pointer-events: none; }

    .main { flex: 1; display: flex; min-height: 0; }
    .rail { width: 32px; background: #dadada; border-right: 1px solid #a0a0a0; display: flex; flex-direction: column; flex: none; }
    .rail button { height: 42px; width: 32px; padding-left: 2px; }
    .rail .gear { height: 24px; margin-bottom: 16px; padding-right: 4px; }
    .rail .gap { margin-top: 12px; }
    .rail .on { background: #fff; height: 46px; margin: 0 0 -2px 2px; width: 30px; padding: 0 1px 0 1px; }

    .panel { width: 237px; flex: none; display: flex; flex-direction: column; padding: 0 9px 6px 6px; border-right: 1px solid #7f8c8a; }
    .phead { display: flex; align-items: center; justify-content: space-between; height: 28px; font-size: 12px; padding: 2px 6px 0 4px; }
    .phead h2 { font: inherit; margin: 0; }
    .phead svg { width: 13px; height: 12px; }
    .tree { flex: 1; min-height: 0; display: flex; flex-direction: column; border: 1px solid #d4d4d4; font-size: 12px; padding: 0 1px; }
    .thead { height: 22px; background: #eff0f1; border-bottom: 1px solid #dcdcdc; display: flex; align-items: center; gap: 18px; padding: 2px 6px 0; justify-content: flex-start; flex: none; }
    .thead svg { width: 10px; height: 5px; }
    .rows { flex: 1; min-height: 0; position: relative; list-style: none; margin: 0; padding: 0; background: repeating-linear-gradient(#fff 0 19px, #e6e6e6 19px 20px, #f9f9f9 20px 39px, #e6e6e6 39px 40px); }
    .row { display: flex; align-items: center; height: 20px; }
    .row.cur span { flex: 1; outline: 1px dotted #202020; outline-offset: -1px; height: 20px; padding-left: 3px; line-height: 18px; }
    .gut { width: 21px; height: 20px; }
    .cur .gut { width: 20px; }
    .folder { width: 15px; height: 14px; }
    .gut.deep { width: 40px; }
    .tick { display: grid; width: 13px; height: 13px; margin-right: 2px; flex: none; }
    .tick input { grid-area: 1 / 1; appearance: none; width: 12px; height: 12px; margin: 0; border: 1px solid #101010; background: #fff; }
    .tick svg { grid-area: 1 / 1; width: 12px; height: 12px; pointer-events: none; }
    .row .node { display: flex; align-items: center; gap: 3px; }
    .row .node svg { width: 15px; height: 15px; }
    .row .bold { font-weight: 700; }
    .cursor { position: absolute; left: 107px; top: 16px; width: 13px; height: 20px; }
    .hscroll { flex: none; height: 20px; background: #ececec; display: flex; align-items: center; padding: 0 7px 3px; border-top: 1px solid #e0e0e0; }
    .hscroll svg { width: 4px; height: 8px; }
    .thumb { width: 83px; height: 14px; margin: 0 auto 0 7px; border: 1px solid #909090; background: linear-gradient(#f4f4f4, #e0e0e0 50%, #cacaca); display: flex; gap: 2px; justify-content: center; align-items: center; }
    .thumb i { width: 1px; height: 7px; background: #606060; }
    .split { height: 4px; flex: none; background: #d4d4d4; border: 1px solid #b0b4b4; margin-bottom: 1px; }
    .fold { height: 24px; flex: none; border-bottom: 2px solid #ced2d2; justify-content: space-between; padding: 0 6px 0 7px; font-size: 14px; color: #106080; }
    .fold svg { width: 10px; height: 9px; }

    .work { flex: 1; min-width: 0; display: flex; flex-direction: column; }
    .tabs { display: flex; height: 23px; border-bottom: 2px solid #56a0b8; flex: none; }
    .tab { display: flex; align-items: center; gap: 6px; background: #56a0b8; color: #fff; font-size: 12px; padding: 0 6px 0 7px; }
    .tab a { color: inherit; text-decoration: none; }
    .tab svg { width: 12px; height: 12px; }
    nx-viewport { flex: 1; }

    .status { flex: none; height: 22px; border-top: 1px solid #989898; display: flex; align-items: center; gap: 4px; padding: 0 55px 2px 3px; font-weight: 700; color: #101010; }
    .status p { margin: 0 auto 0 0; }
    .status svg { width: 16px; height: 16px; }
  `;

  private items(list: Item[]): TemplateResult[] {
    return list.map(i =>
      i.sep ? sep
        : i.arrow ? html`<button class="arr ${i.arrow}" aria-haspopup="true">${caret}</button>`
        : html`<button class="btn">${ic(ICONS, i.icon!, 24, "i24")}</button>`);
  }

  private bigItems(list: Item[]): TemplateResult[] {
    return list.map(i =>
      i.sep ? sep
        : i.arrow ? html`<button class="arr ${i.arrow}" aria-haspopup="true">${caret}</button>`
        : html`<button class="fbtn">${ic(ICONS, i.icon!, 24, "i24")}<span>${i.name}</span></button>`);
  }

  private node(name: string, kind: "asm" | "part" | "work", depth: number, last = false) {
    const gutter = depth
      ? svg`<path d=${last ? "M28.500 0V10M28.500 10.500H38" : "M28.500 0V20M28.500 10.500H38"} fill="none" stroke="#808080" stroke-dasharray="1 1"/>`
      : svg`<path d="M9.500 0V6M14 10.500h6" stroke="#808080" stroke-dasharray="1 1"/><path d="M5.500 6.500h8v8h-8z" fill="#fff" stroke="#c4c4c4"/><path d="M7 10.500h5" stroke="#202020"/>`;
    const glyph = kind === "asm"
      ? svg`${cube(5, 4.5, 4.5, "#f4f4f4", "#fff", "#e4e4e4", "#808080")}${cube(5, 11, 4.5, "#f4f4f4", "#fff", "#e4e4e4", "#808080")}${cube(11.5, 11.5, 4.5, "#f4f4f4", "#fff", "#e4e4e4", "#808080")}`
      : kind === "part"
        ? svg`<path d="M1.500 4.500 9 1.500l5 2v8L7 15l-5.500-3zM1.500 4.500 7 7l7-3.500M7 7v8" fill="#fff" stroke="#707070"/>`
        : svg`<path d="M1.500 4.500 9 1l5 2.500v8L7 15l-5.500-3z" fill="#f0bc28" stroke="#987010"/><path d="M1.500 4.500 9 1l5 2.500L7 7z" fill="#fff2a0"/><path d="M7 7l7-3.500v8L7 15z" fill="#c88c10"/>`;
    return html`<li class="row">
      <svg class=${classMap({ gut: true, deep: depth > 0 })} viewBox="0 0 ${depth ? 40 : 21} 20" aria-hidden="true">${gutter}</svg>
      <label class="tick"><input type="checkbox" checked aria-label=${name}>
        <svg viewBox="0 0 12 12"><path d="M2.500 5.500 5 9 10 2.500" fill="none" stroke="#d02030" stroke-width="2.200"/></svg></label>
      <span class="node"><svg viewBox="0 0 16 16" aria-hidden="true">${glyph}</svg><span class=${kind === "work" ? "bold" : ""}>${name}</span></span>
    </li>`;
  }

  render() {
    return html`
      <header class="title">
        <span class="nx">NX</span>
        <h1>NX 12.0.0.27 - 建模</h1>
        <span class="siemens">SIEMENS</span>
        <div class="wins">
          <button class="win" aria-label="最小化"><svg viewBox="0 0 14 14"><path d="M3 12h8" stroke="#484848" stroke-width="2"/></svg></button>
          <button class="win" aria-label="还原"><svg viewBox="0 0 14 14"><path d="M4.500 6V2.500h8v5H10M1.500 6.500h8v5h-8z" fill="none" stroke="#484848" stroke-width="1.400"/></svg></button>
          <button class="win" aria-label="关闭"><svg viewBox="0 0 14 14"><path d="M2 2l10 10M12 2 2 12" stroke="#484848" stroke-width="1.800"/></svg></button>
        </div>
      </header>

      <nav class="menubar">${grip}
        ${menus.map(([t, k]) => html`<button class=${classMap({ menu: true, wide: t === "首选项" })}><span>${t}${k ? html`(<u>${k}</u>)` : ""}</span></button>`)}
      </nav>

      <div class="bar std">
        <div class="group">${grip}
          <button class="start">${ic(ICONS, "start", 24, "i24")}<span>启动</span></button>
          <button class="arr mid">${caret}</button>
          ${this.items(fileItems)}
          <label class="find"><input type="text" placeholder="查找命令" aria-label="查找命令">
            <svg viewBox="0 0 16 16"><circle cx="9.500" cy="6" r="4.500" fill="#fff" stroke="#404040"/><circle cx="9.500" cy="6" r="2.500" fill="none" stroke="#909090"/><path d="M6 9l-4.500 5" stroke="#404040" stroke-width="2.200"/></svg></label>
          <button class="arr low">${caret}</button>
        </div>
        <div class="group">${grip}${this.items(viewItems)}</div>
        <div class="group">${grip}${this.items(utilItems)}</div>
        <div class="group">${grip}${this.items(lockItems)}</div>
      </div>

      <div class="bar big">
        <div class="group">${grip}${this.bigItems(featureItems)}</div>
        <div class="group">${grip}${this.bigItems(asmItems)}</div>
      </div>

      <div class="bar selbar">
        <label class="pick"><select aria-label="选择过滤器"><option>无选择过滤器</option></select>
          <svg viewBox="0 0 8 4"><path d="M0 0h8L4 4z" fill="#181818"/></svg></label>
        <label class="pick second"><select aria-label="选择范围"><option>整个装配</option></select>
          <svg viewBox="0 0 8 4"><path d="M0 0h8L4 4z" fill="#181818"/></svg></label>
        ${selItems.map(i => i.sep ? sep
          : i.arrow ? html`<button class="arr">${caret}</button>`
          : html`<button class=${classMap({ btn: true, on: !!i.on, tight: !!i.tight })}>${ic(SMALL, i.icon!, 20, "i20")}</button>`)}
        <button class="arr low">${caret}</button>
      </div>

      <main class="main">
        <nav class="rail">
          <button class="gear">${ic(RAIL, "gear", 24, "i24")}</button>
          ${rail.map(r => html`<button class=${classMap({ on: !!r.on, gap: !!r.gap })}>${ic(RAIL, r.icon, 24, "i24")}</button>`)}
        </nav>

        <aside class="panel">
          <div class="phead"><h2>装配导航器</h2>
            <button aria-label="最大化"><svg viewBox="0 0 13 12"><path d="M.500 1.500h12v10H.500z" fill="none" stroke="#202020"/><path d="M0 1h13" stroke="#202020" stroke-width="2"/></svg></button></div>
          <div class="tree">
            <button class="thead">描述性部件名<svg viewBox="0 0 10 5"><path d="M0 5h10L5 0z" fill="#101010"/></svg></button>
            <ul class="rows">
              <li class="row cur">
                <svg class="gut" viewBox="0 0 20 20" aria-hidden="true"><path d="M9.500 20V10.500H20" fill="none" stroke="#808080" stroke-dasharray="1 1"/></svg>
                <svg class="folder" viewBox="0 0 15 12" aria-hidden="true"><path d="M.500 11.500v-10h5l1 2h6v2" fill="#f8d868" stroke="#987010"/><path d="M.500 11.500l3-6h11l-3 6z" fill="#fdeea0" stroke="#987010"/></svg>
                <span>截面</span>
              </li>
              ${this.node("_asm1（顺序：时间顺序）", "asm", 0)}
              ${this.node("外壳", "part", 1)}
              ${this.node("翻盖", "part", 1)}
              ${this.node("桶", "work", 1, true)}
              <svg class="cursor" viewBox="0 0 13 20" aria-hidden="true"><path d="M.500.500v15l4-3 3 6 3-1-3-6h5z" fill="#fff" stroke="#303030"/></svg>
            </ul>
            <div class="hscroll">
              <svg viewBox="0 0 4 8"><path d="M4 0v8L0 4z" fill="#202020"/></svg>
              <div class="thumb"><i></i><i></i><i></i></div>
              <svg viewBox="0 0 4 8"><path d="M0 0v8l4-4z" fill="#202020"/></svg>
            </div>
          </div>
          <div class="split"></div>
          ${["预览", "相关性"].map(t => html`<button class="fold">${t}<svg viewBox="0 0 10 9"><path d="M1 1l4 6.500L9 1" fill="none" stroke="#106080" stroke-width="2"/></svg></button>`)}
        </aside>

        <section class="work">
          <div class="tabs">
            <div class="tab">
              <svg viewBox="0 0 12 12"><path d="M1 3l4-3 2 1v5l5 1v3l-5 2-6-2z" fill="#2c5ce0" stroke="#1838a0" stroke-width=".7"/><path d="M5 0l2 1v5L5 7z" fill="#9cc0ff"/></svg>
              <a href="#">桶.prt 在装配中 _asm1.prt</a>
              <svg viewBox="0 0 12 12"><path d="M9 10.500H2.500v-9h5L10 4v4M10 4H7v3" fill="none" stroke="#fff" stroke-width="1.600"/></svg>
              <svg viewBox="0 0 12 12"><path d="M2 2l8 8M10 2l-8 8" stroke="#fff" stroke-width="2.200"/></svg>
            </div>
          </div>
          <nx-viewport></nx-viewport>
        </section>
      </main>

      <footer class="status">
        <p>选择对象并使用 MB3，或者双击某一对象</p>
        <svg viewBox="0 0 16 16"><path d="M.500.500h15v15H.500z" fill="#e8e8e8" stroke="#c4c4c4"/><path d="M3 5l9-2 1 6-8 2zM5 8l2 5" fill="#d0d0d0" stroke="#909090"/><path d="M5 5l2 4M9 4l1 5M4 8l8-2" stroke="#707070"/></svg>
        <svg viewBox="0 0 16 16"><path d="M.500 4V.500H4M12 .500h3.500V4M.500 12v3.500H4M12 15.500h3.500V12" fill="none" stroke="#b08868"/><path d="M3.500 3.500h9v9h-9z" fill="#a8c4e4" stroke="#405c8c"/><path d="M3 3h10v2.500H3z" fill="#38507c"/></svg>
      </footer>`;
  }
}
